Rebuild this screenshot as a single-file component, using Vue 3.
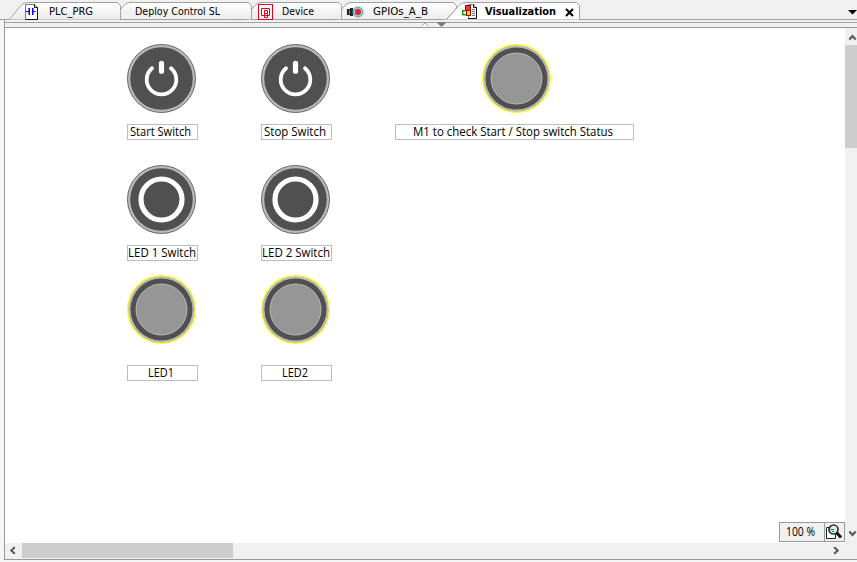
<script setup>
const tabs = [
  { name: 'PLC_PRG', w: 112, icon: 'prg', pad: 41, tw: 44, d: 'M.5 19.5C7 15 11 5 17 3Q19 2.5 21 2.5H109.5L112.5 5.5V19.5' },
  { name: 'Deploy Control SL', w: 131, pad: 15, tw: 85, d: 'M.5 9.5L5 4.5Q7 2.5 10 2.5H128.5L131.5 5.5V19.5' },
  { name: 'Device', w: 90, icon: 'device', pad: 31, tw: 32, d: 'M.5 9.5L5 4.5Q7 2.5 10 2.5H87.5L90.5 5.5V19.5' },
  { name: 'GPIOs_A_B', w: 105, icon: 'gpio', pad: 32, tw: 55, d: 'M.5 9.5L5 4.5Q7 2.5 10 2.5H112.5L115.5 5.5V8L105.5 19.5' },
  { name: 'Visualization', w: 134, icon: 'vis', pad: 39, tw: 71, active: true, d: 'M.5 19.5L13 5.5Q15.5 2.5 19 2.5H130.5L133.5 5.5V19.5' },
]

const widgets = [
  { kind: 'power', x: 127, y: 44 },
  { kind: 'power', x: 261, y: 44 },
  { kind: 'lamp', x: 482, y: 44 },
  { kind: 'ring', x: 127, y: 165 },
  { kind: 'ring', x: 261, y: 165 },
  { kind: 'lamp', x: 127, y: 275 },
  { kind: 'lamp', x: 261, y: 275 },
]

const labels = [
  { text: 'Start Switch', x: 127, y: 124, w: 71, tw: 61, tx: 3 },
  { text: 'Stop Switch', x: 261, y: 124, w: 71, tw: 62, tx: 3 },
  { text: 'M1 to check Start / Stop switch Status', x: 395, y: 124, w: 239, tw: 200, tx: 18 },
  { text: 'LED 1 Switch', x: 127, y: 245, w: 71, tw: 68, tx: 1 },
  { text: 'LED 2 Switch', x: 261, y: 245, w: 71, tw: 68, tx: 1 },
  { text: 'LED1', x: 127, y: 365, w: 71, tw: 26, tx: 21 },
  { text: 'LED2', x: 261, y: 365, w: 71, tw: 26, tx: 21 },
]
</script>

<template>
  <div class="window">
    <header class="tabbar">
      <div v-for="t in tabs" :key="t.name" class="tab" :class="{ active: t.active }" :style="{ width: t.w + 'px', paddingLeft: t.pad + 'px' }">
        <svg class="shape" width="140" height="20">
          <defs>
            <linearGradient id="tabfill" x2="0" y2="1"><stop stop-color="#fff" /><stop offset="1" stop-color="#ececec" /></linearGradient>
          </defs>
          <path :d="t.d" :fill="t.active ? '#fff' : 'url(#tabfill)'" stroke="#a0a0a0" />
        </svg>
        <svg v-if="t.icon === 'prg'" class="icon prg" width="13" height="16">
          <path d="M.5.5H9.5L12.5 3.5V15.5H.5Z" fill="#fff" stroke="#777" />
          <path d="M9.5.5V3.5H12.5V15.5H.5" fill="none" stroke="#111" />
          <path d="M1 7.5H4M8 7.5H10.5" stroke="#00f" />
          <path d="M4.25 4V11M7.75 4V11" stroke="#00f" stroke-width="1.5" />
        </svg>
        <svg v-if="t.icon === 'device'" class="icon device" width="15" height="16">
          <rect x=".5" y=".5" width="14" height="15" fill="#fff" stroke="#e2001a" />
          <path d="M3.5 4.5H11.5V11.5H3.5ZM6.5 6.5H9.5V9.5H6.5ZM6.5 9.5V13.5H9.5V9.5" fill="none" stroke="#e2001a" />
        </svg>
        <svg v-if="t.icon === 'gpio'" class="icon gpio" width="18" height="14">
          <path d="M1 4H4V3H7V11H4V10H1Z" fill="#222" />
          <path d="M3.5 5V9" stroke="#888" />
          <circle cx="12" cy="7" r="5" fill="#91c8e5" stroke="#5e9bbb" />
          <circle cx="12" cy="7" r="3" fill="#ef2020" />
        </svg>
        <svg v-if="t.icon === 'vis'" class="icon vis" width="16" height="16">
          <path d="M6.5.5H11.5L14.5 3.5V14.5H6.5Z" fill="#fff" stroke="#888" />
          <path d="M11.5.5V3.5H14.5V14.5H6" fill="none" stroke="#111" />
          <path d="M10 5.5H13M10 7.5H13M10 9.5H13M10 11.5H13" stroke="#777" />
          <rect x="3.5" y="1.5" width="5" height="5" fill="#f33" stroke="#900" />
          <rect x=".7" y="6.7" width="4" height="4" fill="#fff" stroke="#009e00" stroke-width="1.4" />
          <rect x="4.5" y="6.5" width="4" height="5" fill="#ffe600" stroke="#b00000" />
        </svg>
        <svg class="caption" :width="t.tw" height="15">
          <text x="0" y="11" :textLength="t.tw" lengthAdjust="spacingAndGlyphs">{{ t.name }}</text>
        </svg>
        <svg v-if="t.active" class="close" width="9" height="9"><path d="M1 1L8 8M8 1L1 8" stroke="#000" stroke-width="2.1" /></svg>
      </div>
      <svg class="tab-menu" width="9" height="5"><path d="M0 0H9L4.5 4.5Z" /></svg>
    </header>

    <main class="editor">
      <div class="splitter">
        <svg width="28" height="5">
          <path d="M.5 4.5L4 1L7.5 4.5" fill="#fff" stroke="#aaa" />
          <path d="M16 .5H25L20.5 4.8Z" fill="#777" stroke="#777" stroke-width=".5" />
        </svg>
      </div>
      <div class="view">
        <section class="canvas">
          <svg v-for="(w, i) in widgets" :key="i" class="widget" width="69" height="69" :style="{ left: w.x - 5 + 'px', top: w.y - 28 + 'px' }">
            <template v-if="w.kind === 'lamp'">
              <circle cx="34.5" cy="34.5" r="33.5" fill="#b9b9b9" />
              <circle cx="34.5" cy="34.5" r="33.9" fill="none" stroke="#ff0" stroke-width="1.1" />
              <circle cx="34.5" cy="34.5" r="31" fill="#505050" />
              <circle cx="34.5" cy="34.5" r="25.5" fill="#969696" stroke="#b9b9b9" />
            </template>
            <template v-else>
              <circle cx="34.5" cy="34.5" r="34" fill="#b9b9b9" stroke="#666" />
              <circle cx="34.5" cy="34.5" r="31.3" fill="#505050" />
              <circle v-if="w.kind === 'ring'" cx="34.5" cy="34.5" r="20.5" fill="none" stroke="#fff" stroke-width="5.2" />
              <g v-else fill="none" stroke="#fff" stroke-linecap="round">
                <path d="M25 24.3A14.8 14.8 0 1 0 44 24.3" stroke-width="3.8" />
                <path d="M34.5 19.4V27.2" stroke-width="5.2" />
              </g>
            </template>
          </svg>
          <div v-for="l in labels" :key="l.text" class="label" :style="{ left: l.x - 5 + 'px', top: l.y - 28 + 'px', width: l.w + 'px', paddingLeft: l.tx - 1 + 'px' }">
            <svg :width="l.tw" height="14"><text x="0" y="11" :textLength="l.tw" lengthAdjust="spacingAndGlyphs">{{ l.text }}</text></svg>
          </div>
          <div class="zoom">
            <div class="percent"><svg width="29" height="16"><text x="0" y="12" textLength="29" lengthAdjust="spacingAndGlyphs">100 %</text></svg></div>
            <div class="fit">
              <svg width="18" height="17">
                <path d="M1.5 3.5H10.5V14.5H1.5Z" fill="#fff" stroke="#222" />
                <circle cx="8.5" cy="5.5" r="4.5" fill="#dceeee" stroke="#333" stroke-width="1.7" />
                <path d="M5.5 5.5H9M7 7.5H9" stroke="#087d86" />
                <path d="M11.5 8.5L16 13.5" stroke="#111" stroke-width="3" />
              </svg>
            </div>
          </div>
        </section>
        <aside class="vscroll">
          <svg width="12" height="17"><path d="M4.3 11.5L7.5 8L10.7 11.5" /></svg>
          <div class="vthumb"></div>
          <svg class="end" width="12" height="17"><path d="M4.3 6.5L7.5 10L10.7 6.5" /></svg>
        </aside>
      </div>
      <footer class="hscroll">
        <svg width="17" height="15"><path d="M9.8 4.3L6.3 7.5L9.8 10.7" /></svg>
        <div class="hthumb"></div>
        <svg class="end" width="17" height="15"><path d="M6.2 4.3L9.7 7.5L6.2 10.7" /></svg>
      </footer>
    </main>
  </div>
</template>

<style>
body { background: #f5f5f5; overflow: hidden; }
</style>

<style scoped>
* { box-sizing: border-box; }
svg { display: block; flex: none; }
.window { width: 857px; height: 562px; border-top: 1px solid #f0f0f0; display: flex; flex-direction: column; background: #f5f5f5; }
.tabbar { height: 19px; flex: none; padding-left: 8px; display: flex; background: #f0f0f0; border-bottom: 1px solid #a0a0a0; }
.tab { position: relative; height: 19px; flex: none; padding-top: 3px; font: 11px "DejaVu Sans Condensed", "DejaVu Sans", sans-serif; }
.tab.active { font-weight: bold; display: flex; }
.shape { position: absolute; left: 0; top: -1px; }
.caption { position: relative; overflow: visible; }
.icon { position: absolute; top: 3px; }
.prg { left: 17px; }
.device { left: 7px; }
.gpio { left: 5px; top: 4px; }
.vis { left: 16px; }
.close { position: relative; margin: 4px 0 0 9px; }
.tab-menu { margin: 9px 0 0 auto; }
.editor { height: 540px; flex: none; margin-left: 4px; border-left: 1px solid #999; border-bottom: 1px solid #999; display: flex; flex-direction: column; background: #f0f0f0; }
.splitter { height: 8px; flex: none; padding-left: 416px; border-bottom: 1px solid #999; display: flex; align-items: flex-end; background: linear-gradient(#f0f0f0 2px, #a0a0a0 2px 3px, #f0f0f0 3px); }
.view { height: 515px; flex: none; display: flex; background: #f0f0f0; }
.canvas { position: relative; width: 840px; background: #fff; }
.widget { position: absolute; }
.label { position: absolute; height: 16px; border: 1px solid #bdbdbd; background: #fff; font: 12px "Open Sans", "Noto Sans", sans-serif; }
.label svg, .percent svg { overflow: visible; }
.zoom { position: absolute; left: 774px; bottom: 1px; height: 20px; width: 66px; display: flex; background: #f0f0f0; border: 1px solid #999; }
.percent { width: 45px; padding: 1px 0 0 6px; border-right: 1px solid #999; font: 12px "Open Sans", "Noto Sans", sans-serif; }
.fit { padding: 1px 0 0; }
.vscroll { width: 12px; display: flex; flex-direction: column; }
.vthumb { height: 103px; background: #cdcdcd; }
.vscroll .end { margin-top: auto; margin-bottom: 1px; }
.vscroll path, .hscroll path { fill: none; stroke: #555; stroke-width: 2; }
.hscroll { height: 16px; flex: none; display: flex; padding-right: 12px; }
.hthumb { width: 211px; height: 15px; background: #cdcdcd; }
.hscroll .end { margin-left: auto; }
</style>
